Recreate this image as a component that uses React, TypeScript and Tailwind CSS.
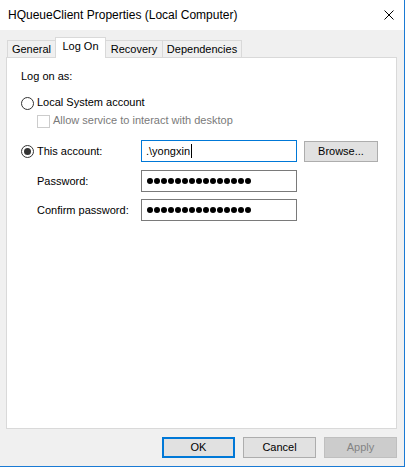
import React from "react";

function Radio({ checked }: { checked?: boolean }) {
  return (
    <span className="flex h-[13px] w-[13px] shrink-0 items-center justify-center rounded-full border border-[#333333] bg-white">
      {checked && <span className="h-[7px] w-[7px] rounded-full bg-[#333333]" />}
    </span>
  );
}

function PasswordDots({ count }: { count: number }) {
  return (
    <div className="flex items-center gap-[1px]">
      {Array.from({ length: count }).map((_, i) => (
        <span key={i} className="h-[6px] w-[6px] rounded-full bg-black" />
      ))}
    </div>
  );
}

function Tab({
  label,
  width,
  selected,
  first,
}: {
  label: string;
  width: string;
  selected?: boolean;
  first?: boolean;
}) {
  const base =
    "flex justify-center border-l border-t border-r border-[#d9d9d9] leading-[13px] text-[11px] pt-[2px]";
  const pos = first ? "ml-[7px]" : "-ml-px";
  if (selected) {
    return (
      <div className={`${base} ${pos} ${width} relative z-10 -mb-px h-[21px] bg-white`}>
        {label}
      </div>
    );
  }
  return <div className={`${base} ${pos} ${width} h-[17px] bg-[#f0f0f0]`}>{label}</div>;
}

function DialogButton({
  label,
  variant,
}: {
  label: string;
  variant: "default" | "normal" | "disabled";
}) {
  const styles = {
    default: "border-2 border-[#0078d7] bg-[#e1e1e1] text-black",
    normal: "border border-[#adadad] bg-[#e1e1e1] text-black",
    disabled: "border border-[#bfbfbf] bg-[#cccccc] text-[#838383]",
  }[variant];
  return (
    <div
      className={`flex h-[21px] w-[73px] items-center justify-center text-[11px] leading-[13px] ${styles}`}
    >
      {label}
    </div>
  );
}

export default function App() {
  return (
    <div className="h-[467px] w-[407px] bg-white font-['Liberation_Sans',Arial,sans-serif] text-black">
      <div className="flex h-[467px] w-[405px] flex-col border-b border-r border-[#1a7ad4]">
        {/* Caption bar */}
        <div className="flex h-[30px] shrink-0 items-center justify-between bg-white pl-[8px] pr-[10px]">
          <span className="text-[12px] leading-[14px]">HQueueClient Properties (Local Computer)</span>
          <svg width="10" height="10" viewBox="0 0 10 10" className="block">
            <path d="M0.5 0.5 L9.5 9.5 M9.5 0.5 L0.5 9.5" stroke="#000" strokeWidth="1" />
          </svg>
        </div>

        {/* Client area */}
        <div className="flex flex-1 flex-col bg-[#f0f0f0] pt-[7px]">
          {/* Tab strip */}
          <div className="flex h-[20px] items-end">
            <Tab label="General" width="w-[49px]" first />
            <Tab label="Log On" width="w-[51px]" selected />
            <Tab label="Recovery" width="w-[58px]" />
            <Tab label="Dependencies" width="w-[80px]" />
          </div>

          {/* Tab page */}
          <div className="ml-[6px] flex h-[372px] w-[391px] flex-col border border-[#d9d9d9] bg-white text-[11px] leading-[13px]">
            <div className="mt-[12px] pl-[14px]">Log on as:</div>

            <div className="mt-[14px] flex h-[13px] items-center gap-[3px] pl-[14px]">
              <Radio />
              <span className="mb-[2px]">Local System account</span>
            </div>

            <div className="mt-[5px] flex h-[13px] items-center gap-[3px] pl-[30px]">
              <span className="h-[13px] w-[13px] shrink-0 border border-[#cccccc] bg-white" />
              <span className="mb-[3px] text-[#7a7a7a]">Allow service to interact with desktop</span>
            </div>

            {/* Account row */}
            <div className="mt-[12px] flex h-[22px] items-center pl-[14px]">
              <Radio checked />
              <span className="ml-[3px] w-[104px]">This account:</span>
              <div className="flex h-[22px] w-[156px] items-center border border-[#0078d7] bg-white pl-[4px]">
                <span>.\yongxin</span>
                <span className="ml-[1px] h-[14px] w-px bg-black" />
              </div>
              <div className="ml-[7px] flex h-[21px] w-[74px] items-center justify-center border border-[#adadad] bg-[#e1e1e1]">
                Browse...
              </div>
            </div>

            <div className="mt-[8px] flex h-[22px] items-center pl-[30px]">
              <span className="w-[104px]">Password:</span>
              <div className="flex h-[22px] w-[156px] items-center border border-[#7a7a7a] bg-white pl-[5px]">
                <PasswordDots count={15} />
              </div>
            </div>

            <div className="mt-[7px] flex h-[22px] items-center pl-[30px]">
              <span className="w-[104px]">Confirm password:</span>
              <div className="flex h-[22px] w-[156px] items-center border border-[#7a7a7a] bg-white pl-[5px]">
                <PasswordDots count={15} />
              </div>
            </div>
          </div>

          {/* Dialog buttons */}
          <div className="mt-[8px] flex justify-end gap-[8px] pr-[7px]">
            <DialogButton label="OK" variant="default" />
            <DialogButton label="Cancel" variant="normal" />
            <DialogButton label="Apply" variant="disabled" />
          </div>
        </div>
      </div>
    </div>
  );
}
